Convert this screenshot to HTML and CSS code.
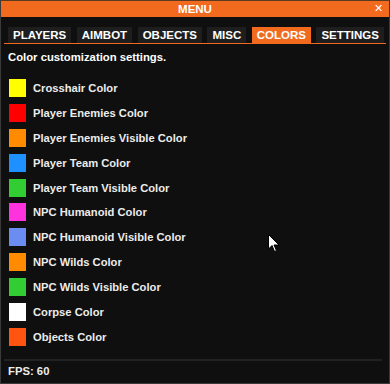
FILE: index.html
```html
<!DOCTYPE html>
<html>
<head>
<meta charset="utf-8">
<link rel="stylesheet" href="styles.css">
</head>
<body>
<div class="window">
  <div class="titlebar">
    <span class="title">MENU</span>
    <span class="close">✕</span>
  </div>
  <div class="tabs">
    <div class="tab">PLAYERS</div>
    <div class="tab">AIMBOT</div>
    <div class="tab">OBJECTS</div>
    <div class="tab">MISC</div>
    <div class="tab active">COLORS</div>
    <div class="tab">SETTINGS</div>
  </div>
  <div class="content">
    <div class="desc">Color customization settings.</div>
    <div class="list">
      <div class="row"><span class="sw" style="background:#ffff00"></span><span class="label">Crosshair Color</span></div>
      <div class="row"><span class="sw" style="background:#ff0000"></span><span class="label">Player Enemies Color</span></div>
      <div class="row"><span class="sw" style="background:#ff8c00"></span><span class="label">Player Enemies Visible Color</span></div>
      <div class="row"><span class="sw" style="background:#1e90ff"></span><span class="label">Player Team Color</span></div>
      <div class="row"><span class="sw" style="background:#32cd32"></span><span class="label">Player Team Visible Color</span></div>
      <div class="row"><span class="sw" style="background:#ff33dd"></span><span class="label">NPC Humanoid Color</span></div>
      <div class="row"><span class="sw" style="background:#6b8cf0"></span><span class="label">NPC Humanoid Visible Color</span></div>
      <div class="row"><span class="sw" style="background:#ff8c00"></span><span class="label">NPC Wilds Color</span></div>
      <div class="row"><span class="sw" style="background:#32cd32"></span><span class="label">NPC Wilds Visible Color</span></div>
      <div class="row"><span class="sw" style="background:#ffffff"></span><span class="label">Corpse Color</span></div>
      <div class="row"><span class="sw" style="background:#ff5511"></span><span class="label">Objects Color</span></div>
    </div>
  </div>
  <div class="footer">FPS: 60</div>
  <svg class="cursor" width="12" height="19" viewBox="0 0 12 19">
    <path d="M0.5 0.5 L0.5 15 L4 11.5 L6.5 17.5 L8.5 16.5 L6 11 L11 11 Z" fill="#ffffff" stroke="#000000" stroke-width="1"/>
  </svg>
</div>
</body>
</html>
```
FILE: styles.css
```css
html, body {
  margin: 0;
  padding: 0;
  background: #0e0e0e;
}
body {
  width: 390px;
  height: 384px;
  overflow: hidden;
  font-family: "Liberation Sans", Arial, sans-serif;
  font-weight: bold;
  color: #ececec;
}
.window {
  position: relative;
  width: 390px;
  height: 384px;
  box-sizing: border-box;
  border: 1px solid #3a3a3a;
  border-top: 1px solid #5a3a20;
  background: #0f0f0f;
  display: flex;
  flex-direction: column;
}
.titlebar {
  height: 16px;
  background: #f26a1e;
  display: flex;
  align-items: center;
  justify-content: center;
  position: relative;
}
.title {
  font-size: 11.5px;
  color: #ffffff;
}
.close {
  position: absolute;
  right: 6px;
  top: 1px;
  font-size: 11px;
  color: #ffffff;
  font-weight: normal;
}
.tabs {
  display: flex;
  gap: 5.5px;
  margin: 10px 3px 0 3px;
  padding-left: 4px;
  border-bottom: 1px solid #f26a1e;
}
.tab {
  height: 16px;
  line-height: 17px;
  padding: 0 5px;
  background: #1e1e1e;
  color: #ffffff;
  font-size: 11.5px;
}
.tab.active {
  background: #f26a1e;
}
.content {
  flex: 1;
  padding: 6px 7px 0 7px;
}
.desc {
  font-size: 11.3px;
  height: 14px;
  line-height: 14px;
  color: #ffffff;
}
.list {
  display: flex;
  flex-direction: column;
  gap: 6.9px;
  margin-top: 15px;
}
.row {
  display: flex;
  align-items: center;
  height: 18px;
  gap: 7px;
}
.sw {
  width: 17px;
  height: 18px;
  margin-left: 1px;
  flex: none;
}
.label {
  font-size: 11.2px;
  color: #ececec;
}
.footer {
  margin: 0 7px 0 3px;
  border-top: 2px solid #222222;
  height: 22px;
  line-height: 20px;
  padding-left: 4px;
  font-size: 11.3px;
  color: #ececec;
}
.cursor {
  position: absolute;
  left: 267px;
  top: 233px;
}
```
